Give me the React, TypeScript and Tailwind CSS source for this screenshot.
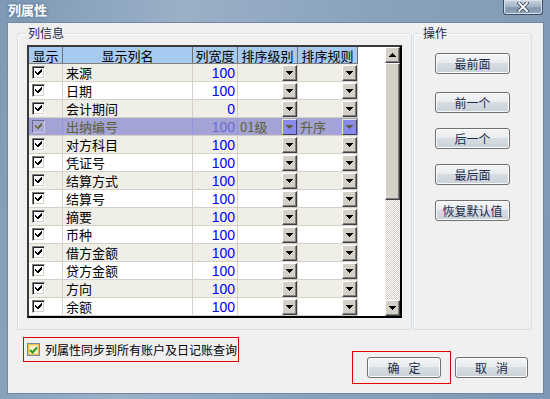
import React from 'react';

type Row = { name: string; w: string; sel?: boolean; lvl?: string; rule?: string };

const rows: Row[] = [
  { name: '来源', w: '100' },
  { name: '日期', w: '100' },
  { name: '会计期间', w: '0' },
  { name: '出纳编号', w: '100', sel: true, lvl: '01级', rule: '升序' },
  { name: '对方科目', w: '100' },
  { name: '凭证号', w: '100' },
  { name: '结算方式', w: '100' },
  { name: '结算号', w: '100' },
  { name: '摘要', w: '100' },
  { name: '币种', w: '100' },
  { name: '借方金额', w: '100' },
  { name: '贷方金额', w: '100' },
  { name: '方向', w: '100' },
  { name: '余额', w: '100' },
];

function Tri({ up, color = '#000' }: { up?: boolean; color?: string }) {
  return (
    <svg width="7" height="4" viewBox="0 0 7 4" shapeRendering="crispEdges">
      <path d={up ? 'M3.5 0 L7 4 L0 4 Z' : 'M0 0 L7 0 L3.5 4 Z'} fill={color} />
    </svg>
  );
}

function DropBtn({ sel }: { sel?: boolean }) {
  return sel ? (
    <div className="w-[15px] h-[16px] flex items-center justify-center bg-[#8a8aee] border border-t-[#e6e6c8] border-l-[#e6e6c8] border-r-[#3c3c5c] border-b-[#3c3c5c]">
      <Tri color="#5e5e3a" />
    </div>
  ) : (
    <div className="w-[15px] h-[16px] flex items-center justify-center bg-[#d4d0c8] border border-t-white border-l-white border-r-[#404040] border-b-[#404040] shadow-[inset_-1px_-1px_0_#808080]">
      <Tri />
    </div>
  );
}

function GridCheck({ sel }: { sel?: boolean }) {
  return (
    <div
      className={
        sel
          ? 'w-[13px] h-[13px] flex items-center justify-center bg-[#a9a9d6] border border-t-[#6a6a90] border-l-[#6a6a90] border-r-[#c8c8e8] border-b-[#c8c8e8]'
          : 'w-[13px] h-[13px] flex items-center justify-center bg-white border border-t-[#808080] border-l-[#808080] border-r-white border-b-white shadow-[inset_1px_1px_0_#202020,inset_-1px_-1px_0_#d4d0c8]'
      }
    >
      <svg width="9" height="9" viewBox="0 0 9 9" shapeRendering="crispEdges">
        <path
          d="M1 3 H2 V4 H3 V5 H4 V4 H5 V3 H6 V2 H7 V1 H8 V4 H7 V5 H6 V6 H5 V7 H3 V6 H2 V5 H1 Z"
          fill={sel ? '#6a6a3c' : '#000'}
        />
      </svg>
    </div>
  );
}

function VBtn({ children, className = '' }: { children: React.ReactNode; className?: string }) {
  return (
    <div
      className={`h-[21px] rounded-[3px] border border-[#707070] bg-[linear-gradient(#f4f5f6_0%,#e9ecee_45%,#d7dde2_50%,#c9d1d8_100%)] shadow-[inset_0_0_0_1px_#fbfbfb] flex items-center justify-center text-[12px] leading-none text-[#1b2a4b] ${className}`}
    >
      {children}
    </div>
  );
}

export default function App() {
  return (
    <div className="w-[550px] h-[399px] flex flex-col overflow-hidden bg-[linear-gradient(100deg,#7f99b5_0%,#9ab0c7_30%,#8aa2bc_60%,#7e98b5_100%)] font-['Noto_Sans_CJK_SC',sans-serif]">
      {/* Title bar */}
      <div className="h-[22px] flex items-start justify-between pl-[8px] pr-[7px] shrink-0">
        <div className="pt-[2px] text-[13px] leading-[16px] font-bold text-white [text-shadow:0_0_4px_#4a6a8c]">列属性</div>
        <div className="w-[40px] h-[15px] rounded-b-[3px] border border-t-0 border-[#3c4b5e] bg-[linear-gradient(#c7d3df_0%,#a2b3c6_50%,#8397ae_55%,#8ea2b9_100%)] shadow-[inset_0_0_0_1px_#d8e1ea] flex items-center justify-center">
          <svg width="12" height="10" viewBox="0 0 12 10">
            <path d="M2 1 L10 9 M10 1 L2 9" stroke="#3a4658" strokeWidth="3.4" strokeLinecap="square" />
            <path d="M2 1 L10 9 M10 1 L2 9" stroke="#ffffff" strokeWidth="1.8" strokeLinecap="square" />
          </svg>
        </div>
      </div>

      {/* Body */}
      <div className="ml-[7px] mr-[6px] mb-[5px] flex-1 bg-[#f0f0f0] border border-[#6f89a5] pl-[9px] pt-[10px] flex flex-col">
        <div className="flex gap-[1px]">
          {/* 列信息 */}
          <div className="relative w-[395px] h-[297px] border border-[#d5dfe5] rounded-[3px] shadow-[inset_1px_1px_0_#ffffff]">
            <span className="absolute left-[8px] top-[-7px] px-[2px] h-[12px] leading-[12px] text-[12px] bg-[#f0f0f0] text-[#1b2a4b]">列信息</span>
            <div className="ml-[9px] mt-[11px] w-[375px] h-[273px] border-2 border-t-[#3a3a3a] border-l-[#3a3a3a] border-r-black border-b-black flex bg-white">
              <div className="w-[356px] flex flex-col">
                {/* header */}
                <div className="flex h-[17px] w-[329px] border-b border-[#808080] bg-[#a6caf0] text-[13px] leading-none text-black">
                  <div className="w-[34px] border-r border-[#6f6f6f] flex items-center justify-center">显示</div>
                  <div className="w-[130px] border-r border-[#6f6f6f] flex items-center justify-center">显示列名</div>
                  <div className="w-[45px] border-r border-[#6f6f6f] flex items-center justify-center">列宽度</div>
                  <div className="w-[60px] border-r border-[#6f6f6f] flex items-center justify-center">排序级别</div>
                  <div className="w-[60px] border-r border-[#6f6f6f] flex items-center justify-center">排序规则</div>
                </div>
                {rows.map((r, i) => {
                  const bg = r.sel ? 'bg-[#a3a3d5]' : i % 2 === 0 ? 'bg-[#efeee7]' : 'bg-white';
                  const line = r.sel ? 'border-[#9595dd]' : 'border-[#d4d0c8]';
                  const txt = r.sel ? 'text-[#5e5e36]' : 'text-black';
                  const num = r.sel ? 'text-[#6a6ad2]' : 'text-[#0000ff]';
                  return (
                    <div key={r.name} className={`flex h-[18px] w-[329px] border-b border-[#d4d0c8] ${bg}`}>
                      <div className={`w-[34px] border-r ${line} pl-[3px] flex items-center`}>
                        <GridCheck sel={r.sel} />
                      </div>
                      <div className={`w-[130px] border-r ${line} pl-[3px] flex items-center text-[13px] leading-none ${txt}`}>{r.name}</div>
                      <div className={`w-[45px] border-r ${line} pr-[2px] flex items-center justify-end text-[14px] leading-none font-['Liberation_Sans',sans-serif] ${num}`}>{r.w}</div>
                      <div className={`w-[60px] border-r ${line} flex items-end`}>
                        <div className={`flex-1 self-center pl-[2px] text-[13px] leading-none ${txt}`}>{r.lvl ?? ''}</div>
                        <DropBtn sel={r.sel} />
                      </div>
                      <div className={`w-[60px] border-r ${line} flex items-end`}>
                        <div className={`flex-1 self-center pl-[2px] text-[13px] leading-none ${txt}`}>{r.rule ?? ''}</div>
                        <DropBtn sel={r.sel} />
                      </div>
                    </div>
                  );
                })}
              </div>
              {/* scrollbar */}
              <div className="w-[15px] flex flex-col">
                <div className="h-[16px] flex items-center justify-center bg-[#d4d0c8] border border-t-white border-l-white border-r-[#404040] border-b-[#404040] shadow-[inset_-1px_-1px_0_#808080]">
                  <Tri up />
                </div>
                <div className="h-[137px] bg-[#d4d0c8] border border-t-white border-l-white border-r-[#404040] border-b-[#404040] shadow-[inset_-1px_-1px_0_#808080]" />
                <div className="flex-1 bg-[image:repeating-conic-gradient(#ffffff_0%_25%,#d4d0c8_0%_50%)] bg-[length:2px_2px]" />
                <div className="h-[16px] flex items-center justify-center bg-[#d4d0c8] border border-t-white border-l-white border-r-[#404040] border-b-[#404040] shadow-[inset_-1px_-1px_0_#808080]">
                  <Tri />
                </div>
              </div>
            </div>
          </div>

          {/* 操作 */}
          <div className="relative w-[119px] h-[297px] border border-[#d5dfe5] rounded-[3px] shadow-[inset_1px_1px_0_#ffffff] flex flex-col pl-[21px] pt-[19px]">
            <span className="absolute left-[7px] top-[-7px] px-[2px] h-[12px] leading-[12px] text-[12px] bg-[#f0f0f0] text-[#1b2a4b]">操作</span>
            <VBtn className="w-[75px]">最前面</VBtn>
            <VBtn className="w-[75px] mt-[18px]">前一个</VBtn>
            <VBtn className="w-[75px] mt-[15px]">后一个</VBtn>
            <VBtn className="w-[75px] mt-[15px]">最后面</VBtn>
            <VBtn className="w-[75px] mt-[15px]">恢复默认值</VBtn>
          </div>
        </div>

        {/* bottom */}
        <div className="flex items-start">
          <div className="ml-[6px] mt-[7px] w-[216px] h-[25px] border border-[#e00000] flex items-center pl-[3px] gap-[5px]">
            <div className="w-[13px] h-[13px] border border-[#6f8aa6] bg-[#fdf3d4] shadow-[inset_0_0_0_1px_#f3c35a,inset_0_0_0_2px_#f9dc92] flex items-center justify-center">
              <svg width="9" height="8" viewBox="0 0 9 8">
                <path d="M1 4 L3.5 6.5 L8 1.5" stroke="#1f9e25" strokeWidth="2" fill="none" />
              </svg>
            </div>
            <span className="text-[12px] leading-none text-black">列属性同步到所有账户及日记账查询</span>
          </div>
          <div className="ml-[113px] mt-[21px] w-[99px] h-[33px] border border-[#e00000] pl-[14px] pt-[5px]">
            <VBtn className="w-[74px] gap-[9px]">
              <span>确</span>
              <span>定</span>
            </VBtn>
          </div>
          <VBtn className="ml-[4px] mt-[27px] w-[73px] gap-[9px]">
            <span>取</span>
            <span>消</span>
          </VBtn>
        </div>
      </div>
    </div>
  );
}
